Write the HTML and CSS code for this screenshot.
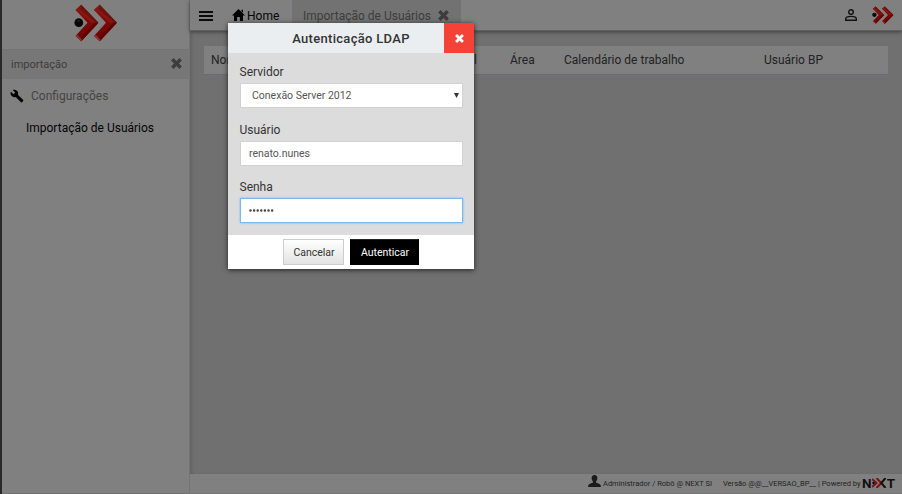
FILE: index.html
```html
<!DOCTYPE html>
<html lang="pt-BR">
<head>
<meta charset="utf-8">
<title>Importação de Usuários</title>
<link rel="stylesheet" href="styles.css">
</head>
<body>
<svg class="defs" width="0" height="0" aria-hidden="true">
  <defs>
    <linearGradient id="red" x1="0" y1="0" x2="0" y2="1">
      <stop offset="0" stop-color="#8d1512"/><stop offset=".5" stop-color="#7c0907"/><stop offset="1" stop-color="#6d0504"/>
    </linearGradient>
    <symbol id="chevron" viewBox="0 0 24 38">
      <path d="M6 0L24 18.800 6 38 0 32.500 12.500 18.800 0 5.500z" fill="url(#red)"/>
      <path d="M6 0L24 18.800H21L3 2.800z" fill="#681410"/>
      <path d="M3 2.800L21 18.800H17L1 4.600z" fill="#8a1511"/>
      <path d="M6 38L24 18.800H20L4 36z" fill="#5c0302"/>
      <path d="M0 32.500l6 5.500 1-1.500-5.500-5.500z" fill="#8f302b"/>
      <path d="M6 0L0 5.500 1.500 7 7 1z" fill="#7e1c18"/>
    </symbol>
    <symbol id="logo" viewBox="0 0 44 38">
      <use href="#chevron" x="1.500" y="0" width="23" height="38"/>
      <use href="#chevron" x="20" y="0" width="23" height="38"/>
      <circle cx="4.800" cy="18.700" r="4.400" fill="#070707"/>
      <circle cx="4.600" cy="16.800" r="1.300" fill="#202020"/>
    </symbol>
    <symbol id="times" viewBox="0 0 10 10">
      <path d="M1.200 1.200L8.800 8.800M8.800 1.200L1.200 8.800" fill="none" stroke="currentColor" stroke-width="3.100"/>
    </symbol>
  </defs>
</svg>
<div class="app">
  <aside class="sidebar">
    <div class="brand"><svg width="44" height="38"><use href="#logo"/></svg></div>
    <div class="search"><span>importação</span><svg width="11" height="11"><use href="#times"/></svg></div>
    <div class="group">
      <svg width="14" height="14" viewBox="0 0 24 24"><path d="M22.700 19l-9.100-9.100c.9-2.300.4-5-1.500-6.900-2-2-5-2.400-7.400-1.300L9 6 6 9 1.600 4.700C.4 7.100.9 10.100 2.900 12.100c1.900 1.900 4.600 2.400 6.900 1.500l9.100 9.100c.4.400 1 .4 1.400 0l2.300-2.300c.5-.4.500-1.100.1-1.400z"/></svg>
      <span>Configurações</span>
    </div>
    <a class="item">Importação de Usuários</a>
  </aside>
  <div class="main">
    <header class="topbar">
      <svg class="menu" width="14" height="10" viewBox="0 0 14 10"><path d="M0 1h14M0 5h14M0 9h14" stroke="#0a0a0a" stroke-width="2"/></svg>
      <div class="home"><svg width="13" height="12" viewBox="0 0 13 12"><path d="M6.500 0L13 6.400h-2V12H7.900V8H5.100v4H2V6.400H0L6.500 0zM9.500.8H11v3L9.500 2.400z"/></svg><span>Home</span></div>
      <div class="tab"><span>Importação de Usuários</span><svg width="11" height="11"><use href="#times"/></svg></div>
      <svg class="user" width="12" height="12" viewBox="0 0 12 12"><g fill="none" stroke="#111" stroke-width="1.400"><circle cx="6" cy="3" r="2.300"/><path d="M.7 11.300V9.700C.7 8.300 3.500 7.400 6 7.400s5.300.9 5.300 2.300v1.600z"/></g></svg>
      <svg class="mini" width="22" height="18" viewBox="0 0 44 38" preserveAspectRatio="none"><use href="#logo" width="44" height="38"/></svg>
    </header>
    <main class="content">
      <div class="grid-head"><span>Nome</span><span class="mail">E-mail</span><span>Área</span><span>Calendário de trabalho</span><span>Usuário BP</span></div>
    </main>
    <footer class="footer">
      <svg class="person" width="13" height="12" viewBox="0 0 13 12"><path d="M6.500 0c2 0 3 1.500 2.900 3.300C9.300 5 8.500 6 8 6.600v1c1.500.9 4.500 1.200 4.800 3.200V12H.2v-1.200c.3-2 3.300-2.300 4.800-3.200v-1C4.500 6 3.700 5 3.600 3.300 3.500 1.500 4.500 0 6.500 0z" fill="#1b1b1b"/></svg>
      <span class="who">Administrador / Robô @ NEXT SI</span>
      <span class="version">Versão @@__VERSAO_BP__ | Powered by</span>
      <span class="next"><b>N</b><svg width="15" height="10" viewBox="0 0 15 10"><path d="M0 1l4.500 4L0 9M4.500 0l4.800 5-4.800 5" fill="none" stroke="#7c1510" stroke-width="2"/><path d="M13.500 0L9.300 5l4.200 5" fill="none" stroke="#111" stroke-width="2"/><circle cx="1.500" cy="5" r="1.200"/></svg><b>T</b></span>
    </footer>
  </div>
</div>
<div class="modal" role="dialog">
  <div class="modal-head"><h1>Autenticação LDAP</h1><button class="close" aria-label="Fechar"><svg width="9" height="9"><use href="#times"/></svg></button></div>
  <div class="modal-body">
    <label>Servidor</label>
    <div class="field select"><span>Conexão Server 2012</span><svg width="5" height="5" viewBox="0 0 5 5"><path d="M0 0h5L2.500 5z" fill="#333"/></svg></div>
    <label>Usuário</label>
    <div class="field user-field">renato.nunes</div>
    <label>Senha</label>
    <div class="field focus"><svg width="25" height="3" viewBox="0 0 25 3"><path d="M1.500 1.500h22" stroke="#444" stroke-width="2.500" stroke-linecap="round" stroke-dasharray="0 3.600"/></svg></div>
  </div>
  <div class="modal-foot"><button class="btn">Cancelar</button><button class="btn primary">Autenticar</button></div>
</div>
</body>
</html>
```
FILE: styles.css
```css
* { box-sizing: border-box; }
body { margin: 0; width: 902px; height: 494px; overflow: hidden; font: 12px/16px Roboto, sans-serif; color: #222; background: #707070; }
svg { display: block; flex: none; }
.defs { position: absolute; }
span { white-space: nowrap; }
.app { display: flex; height: 494px; border-left: 2px solid #292929; }
.sidebar { width: 188px; background: #808080; border-right: 1px solid #747474; border-bottom: 1px solid #6f6f6f; flex: none; }
.brand { height: 50px; padding: 4px 0 0 72px; border-bottom: 1px solid #747474; }
.search { height: 29px; background: #777; display: flex; align-items: center; justify-content: space-between; padding: 0 7px 2px 9px; font-size: 11px; color: #3d3d3d; }
.search span { padding-top: 2px; }
.search svg, .tab svg { color: #3d3d3d; }
.group { height: 34px; display: flex; align-items: center; gap: 7px; padding-left: 8px; color: #444; }
.item { display: block; padding: 7px 0 0 24px; color: #050505; }
.main { flex: 1; display: flex; flex-direction: column; min-width: 0; }
.topbar { height: 31px; background: #808080; border-bottom: 1px solid #606060; box-shadow: 0 1px 4px #3e3e3e; display: flex; align-items: center; flex: none; z-index: 1; }
.menu { margin-left: 9px; margin-top: 1px; }
.home { display: flex; align-items: center; gap: 2px; width: 60px; margin-left: 19px; color: #050505; padding-top: 1px; }
.home svg { margin-bottom: 2px; }
.tab { height: 30px; width: 169px; background: #727272; display: flex; align-items: center; gap: 7px; padding-left: 11px; color: #3d3d3d; }
.tab span { padding-top: 2px; }
.user { margin-left: auto; margin-right: 15px; }
.mini { margin-right: 8px; }
.content { flex: 1; background: #707070; padding: 15px 14px; box-shadow: inset 3px 0 4px -2px #5c5c5c; }
.grid-head { height: 29px; background: #808080; border-bottom: 1px solid #686b70; display: grid; grid-template-columns: 226px 73px 54px 200px 1fr; align-items: center; padding-left: 7px; }
.mail { padding-left: 7px; }
.footer { height: 20px; background: #808080; border-bottom: 1px solid #747474; display: flex; align-items: center; font-size: 7.500px; line-height: 10px; flex: none; padding-right: 7px; }
.person { margin-left: 398px; margin-bottom: 5px; }
.who { margin-left: 2px; }
.version { margin-left: 11px; }
.next { margin-left: auto; display: flex; align-items: center; font-size: 13.500px; color: #111; padding-bottom: 2px; }
.modal { position: absolute; z-index: 2; left: 228px; top: 23px; width: 246px; height: 246px; background: #fff; box-shadow: 0 1px 5px #222; display: flex; flex-direction: column; }
.modal-head { height: 30px; background: #ebeef1; display: flex; }
h1 { flex: 1; margin: 0; padding-left: 30px; text-align: center; font: 500 13px/32px Roboto, sans-serif; letter-spacing: .3px; color: #333; }
.close { width: 30px; border: 0; padding: 0; background: #f44336; color: #fff; display: flex; align-items: center; justify-content: center; }
.modal-body { height: 182px; background: #dcdcdc; padding: 11px 11px 0 12px; color: #333; }
label { display: block; height: 19px; margin-left: -.5px; }
.field { height: 25px; margin-bottom: 14px; background: #fff; border: 1px solid #d2d2d2; display: flex; align-items: center; padding: 0 8px; font-size: 10.500px; color: #555; }
.user-field { margin-bottom: 13px; }
.select { padding: 0 3px 0 11px; justify-content: space-between; }
.focus { border-color: #79b9ed; box-shadow: 0 0 2px #75b8ef; }
.modal-foot { flex: 1; display: flex; gap: 6px; padding: 4px 0 0 55px; }
.btn { width: 61px; height: 26px; padding: 1px 0 0 1px; border: 1px solid #ccc; background: linear-gradient(#fff, #e2e2e2); font: 10.500px/16px Roboto, sans-serif; color: #333; }
.primary { width: 69px; background: #000; border-color: #222 #000 #000; color: #fff; }
```
